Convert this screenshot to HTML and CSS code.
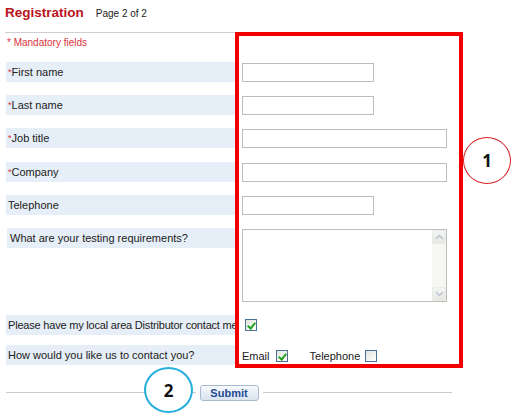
FILE: index.html
```html
<!DOCTYPE html>
<html lang="en">
<head>
    <meta charset="UTF-8">
    <meta name="viewport" content="width=device-width, initial-scale=1.0">
    <title>Registration</title>
    <link rel="stylesheet" href="styles.css">
</head>
<body>
    <div class="page">
        <div class="head">
            <h1 class="title">Registration</h1>
            <span class="pager">Page 2 of 2</span>
        </div>
        <p class="mandatory">* Mandatory fields</p>

        <form class="form">
            <div class="row">
                <label class="lbl"><span class="req">*</span>First name</label>
                <input class="field short" type="text">
            </div>
            <div class="row">
                <label class="lbl"><span class="req">*</span>Last name</label>
                <input class="field short" type="text">
            </div>
            <div class="row">
                <label class="lbl"><span class="req">*</span>Job title</label>
                <input class="field long" type="text">
            </div>
            <div class="row">
                <label class="lbl"><span class="req">*</span>Company</label>
                <input class="field long" type="text">
            </div>
            <div class="row">
                <label class="lbl">Telephone</label>
                <input class="field short" type="text">
            </div>
            <div class="row row-area">
                <label class="lbl lbl-wide">What are your testing requirements?</label>
                <div class="area-wrap">
                    <textarea class="area"></textarea>
                    <div class="scroll">
                        <span class="sb-btn">
                            <svg width="9" height="6" viewBox="0 0 9 6"><path d="M1 5 L4.5 1.5 L8 5" fill="none" stroke="#b9c3cf" stroke-width="1.5"/></svg>
                        </span>
                        <span class="sb-track"></span>
                        <span class="sb-btn">
                            <svg width="9" height="6" viewBox="0 0 9 6"><path d="M1 1 L4.5 4.5 L8 1" fill="none" stroke="#b9c3cf" stroke-width="1.5"/></svg>
                        </span>
                    </div>
                </div>
            </div>
            <div class="row row-check">
                <label class="lbl nowrap tight">Please have my local area Distributor contact me</label>
                <div class="opts">
                    <span class="box checked"></span>
                </div>
            </div>
            <div class="row row-contact">
                <label class="lbl">How would you like us to contact you?</label>
                <div class="opts">
                    <span class="opt">Email</span>
                    <span class="box checked"></span>
                    <span class="opt opt-tel">Telephone</span>
                    <span class="box"></span>
                </div>
            </div>

            <div class="submit-row">
                <span class="rule"></span>
                <button class="submit" type="button">Submit</button>
                <span class="rule"></span>
            </div>
        </form>

        <!-- annotations -->
        <div class="mark-box"></div>
        <div class="callout callout-1">1</div>
        <div class="callout callout-2">2</div>
    </div>
</body>
</html>
```

FILE: styles.css
```css
body {
    margin: 0;
    background: white;
    font-family: "Liberation Sans", Arial, sans-serif;
    color: #222;
}
.page {
    position: relative;
    width: 515px;
    height: 418px;
    overflow: hidden;
}
.head {
    display: flex;
    align-items: baseline;
    gap: 12px;
    box-sizing: border-box;
    width: 447px;
    height: 33px;
    margin-left: 5px;
    padding-top: 3px;
    border-bottom: 1px solid #cfcfcf;
}
.title {
    margin: 0;
    font-size: 13.5px;
    line-height: 20px;
    font-weight: bold;
    color: #b8141c;
}
.pager {
    font-size: 10px;
    color: #222;
}
.mandatory {
    margin: 3px 0 12px 7px;
    font-size: 10px;
    line-height: 14px;
    color: #d8323c;
}
.form {
    margin: 0 0 0 6px;
    width: 446px;
}
.row {
    display: grid;
    grid-template-columns: 229px 1fr;
    column-gap: 7px;
    align-items: start;
    margin-bottom: 13.2px;
}
.lbl {
    display: block;
    height: 20px;
    line-height: 20px;
    padding-left: 2px;
    font-size: 11px;
    background: #e6eef7;
}
.lbl-wide {
    padding-left: 3px;
    margin-left: 1px;
}
.nowrap {
    white-space: nowrap;
}
.tight {
    letter-spacing: -0.2px;
}
.req {
    color: #d8323c;
    font-size: 9px;
    vertical-align: 1px;
}
.field {
    box-sizing: border-box;
    height: 19px;
    margin-top: 1px;
    border: 1px solid #bdbdbd;
    padding: 1px 3px;
    font: 11px "Liberation Sans", Arial, sans-serif;
}
.short {
    width: 132px;
}
.long {
    width: 205px;
}
.row-area {
    margin-bottom: 13px;
}
.area-wrap {
    display: flex;
    box-sizing: border-box;
    width: 205px;
    height: 73px;
    margin-top: 1px;
    border: 1px solid #bdbdbd;
}
.area {
    flex: 1;
    border: none;
    padding: 2px 3px;
    resize: none;
    outline: none;
    font: 11px "Liberation Sans", Arial, sans-serif;
}
.scroll {
    display: flex;
    flex-direction: column;
    width: 14px;
    background: #f6f6f2;
}
.sb-btn {
    display: flex;
    align-items: center;
    justify-content: center;
    height: 14px;
    box-sizing: border-box;
    border: 1px solid #e9ebe6;
    border-radius: 2px;
    background: linear-gradient(to bottom, #f4f5f1, #e6e8e3);
}
.sb-track {
    flex: 1;
}
.row-check {
    margin-bottom: 10px;
}
.opts {
    display: flex;
    align-items: center;
    height: 20px;
    font-size: 11px;
}
.row-check .box {
    margin-left: 3px;
}
.row-contact .opts {
    padding-top: 1px;
}
.opt {
    margin-right: 6px;
}
.opt-tel {
    margin-left: 22px;
    margin-right: 5px;
}
.box {
    position: relative;
    box-sizing: border-box;
    width: 12px;
    height: 12px;
    border: 1px solid #4c7196;
    background: linear-gradient(135deg, #e2e2dc, #ffffff);
}
.checked::after {
    content: "";
    position: absolute;
    left: 3px;
    top: 1px;
    width: 3px;
    height: 6px;
    border-right: 2px solid #21a121;
    border-bottom: 2px solid #21a121;
    transform: rotate(40deg);
}
.submit-row {
    display: flex;
    align-items: center;
    gap: 4px;
    margin-top: 19px;
}
.rule {
    flex: 1;
    height: 1px;
    background: #c9c9c9;
}
.submit {
    width: 59px;
    height: 16px;
    padding: 0;
    border: 1px solid #a9bad0;
    border-radius: 3px;
    background: linear-gradient(to bottom, #f7f9fc, #d9e3ef);
    font: bold 11px "Liberation Sans", Arial, sans-serif;
    color: #1d4b94;
    cursor: pointer;
}
.mark-box {
    position: absolute;
    left: 235px;
    top: 32px;
    width: 228px;
    height: 336px;
    box-sizing: border-box;
    border: 4px solid #f20000;
}
.callout {
    position: absolute;
    display: flex;
    align-items: center;
    justify-content: center;
    box-sizing: border-box;
    border-radius: 50%;
    background: white;
    font: bold 17px "Open Sans", "Liberation Sans", sans-serif;
    color: #111;
}
.callout-1 {
    left: 463px;
    top: 137px;
    width: 48px;
    height: 47px;
    border: 1.5px solid #d42222;
}
.callout-2 {
    left: 144px;
    top: 367px;
    width: 49px;
    height: 46px;
    border: 2px solid #26aede;
}
```
